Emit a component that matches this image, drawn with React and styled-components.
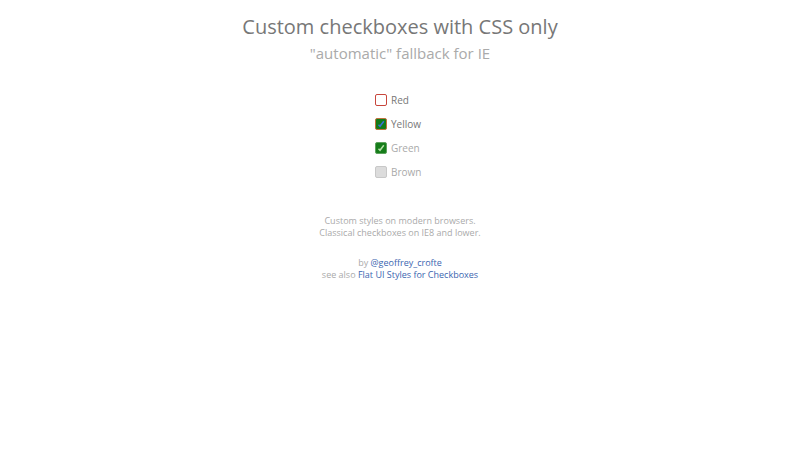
import styled, { createGlobalStyle } from "styled-components";

const GlobalStyle = createGlobalStyle`
  body {
    margin: 0;
    background: #fff;
    font-family: "Open Sans", "Liberation Sans", sans-serif;
  }
`;

const options = [
  { label: "Red", state: "empty" },
  { label: "Yellow", state: "focus" },
  { label: "Green", state: "checked" },
  { label: "Brown", state: "disabled" },
];

const App = () => {
  return (
    <Page>
      <GlobalStyle />
      <Title>Custom checkboxes with CSS only</Title>
      <Subtitle>"automatic" fallback for IE</Subtitle>

      <List>
        {options.map((o) => (
          <Row key={o.label}>
            <Box $state={o.state}>
              {(o.state === "focus" || o.state === "checked") && (
                <svg width="8" height="8" viewBox="0 0 8 8">
                  <path
                    d="M1.5 4.8 L3 6.3 L6.8 1.2"
                    fill="none"
                    stroke={o.state === "focus" ? "#3a6fd8" : "#b6e0a8"}
                    strokeWidth="1.5"
                  />
                </svg>
              )}
            </Box>
            <Label $muted={o.state === "checked" || o.state === "disabled"}>
              {o.label}
            </Label>
          </Row>
        ))}
      </List>

      <Note>
        Custom styles on modern browsers.
        <br />
        Classical checkboxes on IE8 and lower.
      </Note>

      <Credits>
        by <a href="#">@geoffrey_crofte</a>
        <br />
        see also <a href="#">Flat UI Styles for Checkboxes</a>
      </Credits>
    </Page>
  );
};

export default App;

const Page = styled.div`
  width: 800px;
  height: 450px;
  display: flex;
  flex-direction: column;
  align-items: center;
  padding-top: 12px;
  box-sizing: border-box;
`;

const Title = styled.h1`
  margin: 0;
  font-size: 20px;
  font-weight: 400;
  line-height: 30px;
  color: #777;
`;

const Subtitle = styled.h2`
  margin: 0;
  font-size: 15px;
  font-weight: 400;
  line-height: 22px;
  color: #aaa;
`;

const List = styled.div`
  margin-top: 27px;
  display: flex;
  flex-direction: column;
  gap: 6px;
  padding-left: 30px;
  width: 80px;
`;

const Row = styled.div`
  display: flex;
  align-items: center;
  height: 18px;
`;

const boxStyles = {
  empty: "border: 1px solid #c8463c; background: #fff;",
  focus: "border: 1px solid #c0733c; background: #137a19;",
  checked: "border: 1px solid #5ea35e; background: #167d1a;",
  disabled: "border: 1px solid #c8c8c8; background: #dcdcdc;",
};

const Box = styled.span`
  width: 10px;
  height: 10px;
  border-radius: 2px;
  display: flex;
  align-items: center;
  justify-content: center;
  margin-right: 4px;
  ${(p) => boxStyles[p.$state]}
`;

const Label = styled.span`
  font-size: 10px;
  color: ${(p) => (p.$muted ? "#aaa" : "#777")};
`;

const Note = styled.p`
  margin: 34px 0 0;
  font-size: 9px;
  line-height: 12px;
  color: #aaa;
  text-align: center;
`;

const Credits = styled.p`
  margin: 18px 0 0;
  font-size: 9px;
  line-height: 12px;
  color: #aaa;
  text-align: center;

  a {
    color: #3b66b0;
    text-decoration: none;
  }
`;
